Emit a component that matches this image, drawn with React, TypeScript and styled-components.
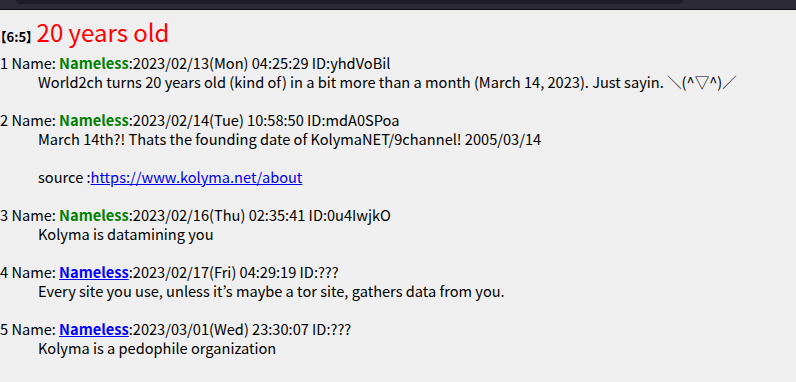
import React from 'react'
import styled, { createGlobalStyle } from 'styled-components'

const GlobalStyle = createGlobalStyle`
  html, body {
    margin: 0;
    padding: 0;
    background: #efefef;
  }
  body {
    font-family: "Noto Sans CJK JP", "Noto Sans", sans-serif;
    font-size: 14.6px;
    color: #000;
  }
`

const TopBar = styled.div`
  display: flex;
  height: 9px;
  background: #2b2a36;
  border-bottom: 1px solid #0b0b0e;
`

const TopTab = styled.div`
  margin-left: 16px;
  width: 667px;
  height: 4px;
  background: #1e1d25;
  border-radius: 0 0 4px 4px;
`

const Thread = styled.div`
  padding-top: 8px;
`

const Title = styled.h1`
  margin: 0 0 2px;
  font-size: 24px;
  font-weight: normal;
  line-height: 28px;
  color: #ff0000;
`

// "palt" makes the CJK brackets proportional, as in the original
const Count = styled.span`
  font-size: 13px;
  font-weight: bold;
  color: #000;
  font-feature-settings: "palt";
  margin-right: 4px;
`

const Posts = styled.dl`
  margin: 0;
`

const Header = styled.dt`
  line-height: 19px;
`

const NameText = styled.b`
  color: #008000;
`

const NameLink = styled.a`
  color: #0000ff;
  font-weight: bold;
`

const Body = styled.dd`
  margin: 0 0 19px 38px;
  line-height: 19px;
`

const Link = styled.a`
  color: #0000ee;
`

type Post = {
  no: number
  mail?: boolean
  date: string
  id: string
  body: React.ReactNode
}

const posts: Post[] = [
  {
    no: 1,
    date: '2023/02/13(Mon) 04:25:29',
    id: 'yhdVoBil',
    body: 'World2ch turns 20 years old (kind of) in a bit more than a month (March 14, 2023). Just sayin. ＼(^▽^)／',
  },
  {
    no: 2,
    date: '2023/02/14(Tue) 10:58:50',
    id: 'mdA0SPoa',
    body: (
      <>
        March 14th?! Thats the founding date of KolymaNET/9channel! 2005/03/14
        <br />
        <br />
        source :<Link href="#">https://www.kolyma.net/about</Link>
      </>
    ),
  },
  {
    no: 3,
    date: '2023/02/16(Thu) 02:35:41',
    id: '0u4IwjkO',
    body: 'Kolyma is datamining you',
  },
  {
    no: 4,
    mail: true,
    date: '2023/02/17(Fri) 04:29:19',
    id: '???',
    body: 'Every site you use, unless it’s maybe a tor site, gathers data from you.',
  },
  {
    no: 5,
    mail: true,
    date: '2023/03/01(Wed) 23:30:07',
    id: '???',
    body: 'Kolyma is a pedophile organization',
  },
]

export default function App() {
  return (
    <>
      <GlobalStyle />
      <TopBar>
        <TopTab />
      </TopBar>
      <Thread>
        <Title>
          <Count>【6:5】</Count>20 years old
        </Title>
        <Posts>
          {posts.map((p) => (
            <React.Fragment key={p.no}>
              <Header>
                {p.no} Name:{' '}
                {p.mail ? (
                  <NameLink href="#">Nameless</NameLink>
                ) : (
                  <NameText>Nameless</NameText>
                )}
                :{p.date} ID:{p.id}
              </Header>
              <Body>{p.body}</Body>
            </React.Fragment>
          ))}
        </Posts>
      </Thread>
    </>
  )
}
